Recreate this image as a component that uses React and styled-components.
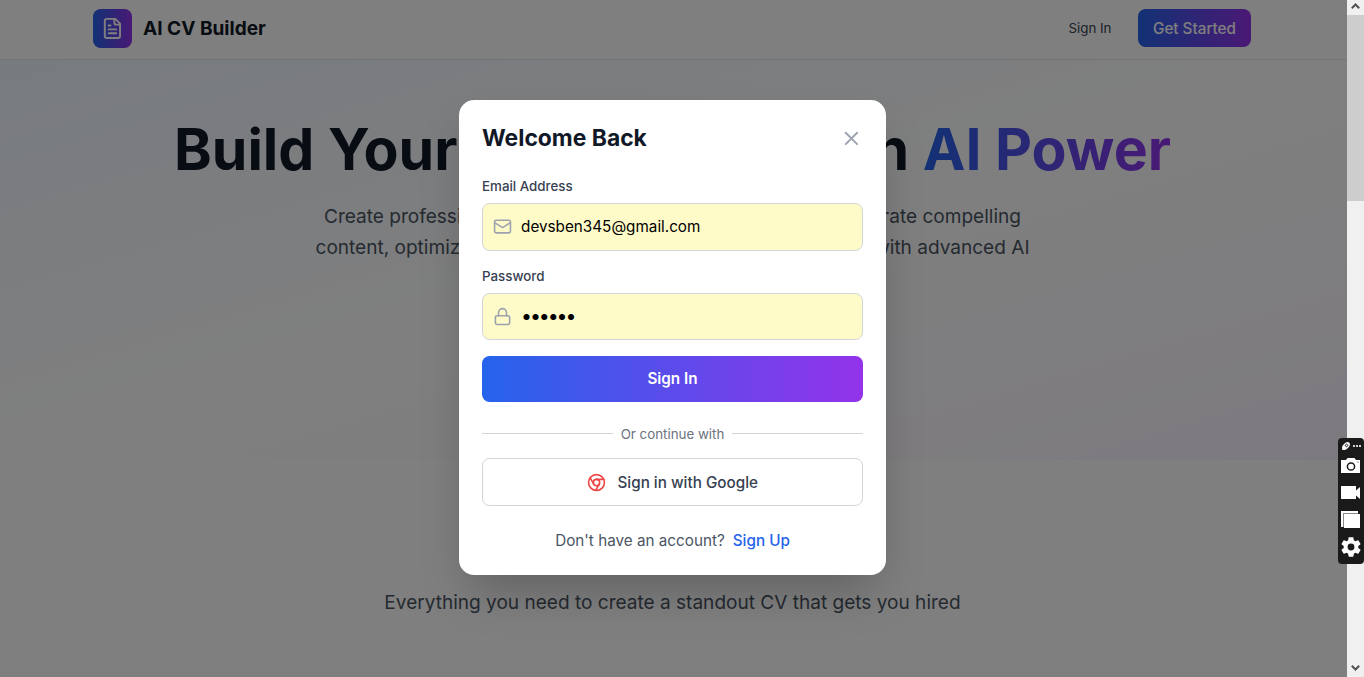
import React from "react";
import styled, { createGlobalStyle } from "styled-components";
import { Mail, Lock, X, Chrome } from "lucide-react";

const GlobalStyle = createGlobalStyle`
  *, *::before, *::after { box-sizing: border-box; }
  html, body { margin: 0; height: 100%; overflow: hidden; }
  body { font-family: Inter, "Liberation Sans", sans-serif; font-size: 15.25px; line-height: 22.9px; color: #111827; }
  h1, h2, p { margin: 0; }
  button, input { font: inherit; margin: 0; }
`;

const brand = "linear-gradient(to right, #2563eb, #9333ea)";

const Window = styled.div`
  display: flex;
  width: 1364px;
  height: 677px;
  overflow: hidden;
`;

const Page = styled.div`
  position: relative;
  width: 1347px;
  height: 677px;
  overflow: hidden;
  background: #fff;
`;

const Header = styled.header`
  height: 60px;
  padding: 0 96px 3px 93px;
  display: flex;
  align-items: center;
  justify-content: space-between;
  background: #fff;
  border-bottom: 1px solid #e5e7eb;
`;

const Brand = styled.div`
  display: flex;
  align-items: center;
  gap: 11px;
`;

const BrandName = styled.span`
  padding-top: 2px;
  font-size: 19.06px;
  font-weight: 700;
`;

const LogoTile = styled.div`
  width: 39px;
  height: 39px;
  border-radius: 7.6px;
  display: grid;
  place-items: center;
  color: #fff;
  background: ${brand};
`;

const Nav = styled.nav`
  display: flex;
  align-items: center;
  gap: 26.5px;
`;

const NavLink = styled.a`
  font-size: 13.34px;
  color: #374151;
`;

const NavButton = styled.button`
  width: 113px;
  height: 38px;
  padding: 2px 0 0;
  border: 0;
  border-radius: 7.6px;
  color: #fff;
  font-weight: 500;
  background: ${brand};
`;

const Hero = styled.section`
  height: 400px;
  padding: 61px 2px 0 0;
  display: flex;
  flex-direction: column;
  align-items: center;
  background: linear-gradient(to bottom right, #eff6ff, #ffffff, #faf5ff);
`;

const HeroTitle = styled.h1`
  font-size: 57.2px;
  line-height: 57.2px;
  font-weight: 700;
  white-space: nowrap;
`;

const GradientText = styled.span`
  color: transparent;
  background: ${brand};
  -webkit-background-clip: text;
  background-clip: text;
`;

const HeroCopy = styled.p`
  margin-top: 22.5px;
  display: flex;
  flex-direction: column;
  align-items: center;
  font-size: 19.06px;
  line-height: 31px;
  color: #4b5563;
`;

const CopyLine = styled.span`
  display: flex;
  justify-content: space-between;
  width: ${(p) => p.$width}px;
  white-space: nowrap;
`;

const Features = styled.section`
  padding: 76px 2px 0 0;
  text-align: center;
`;

const FeaturesTitle = styled.h2`
  font-size: 34.3px;
  line-height: 38px;
  font-weight: 700;
`;

const FeaturesCopy = styled.p`
  margin-top: 16px;
  font-size: 19.06px;
  line-height: 26.7px;
  color: #4b5563;
`;

const Overlay = styled.div`
  position: absolute;
  inset: 0;
  padding: 100px 2px 0 0;
  display: flex;
  justify-content: center;
  align-items: flex-start;
  background: rgba(0, 0, 0, 0.5);
`;

const Dialog = styled.div`
  width: 427px;
  height: 475px;
  padding: 23px;
  border-radius: 15.25px;
  background: #fff;
  box-shadow: 0 23.8px 47.6px -11.4px rgba(0, 0, 0, 0.25);
`;

const DialogHeader = styled.div`
  height: 30.5px;
  margin-bottom: 23px;
  display: flex;
  align-items: center;
  justify-content: space-between;
`;

const DialogTitle = styled.h2`
  font-size: 22.87px;
  line-height: 30.5px;
  font-weight: 700;
`;

const CloseButton = styled.button`
  display: flex;
  padding: 0;
  border: 0;
  background: none;
  color: #9ca3af;
`;

const Field = styled.div`
  margin-bottom: 15.5px;
`;

const Label = styled.label`
  display: block;
  margin-bottom: 7.5px;
  font-size: 13.34px;
  line-height: 19px;
  font-weight: 500;
  color: #374151;
`;

const InputBox = styled.div`
  height: ${(p) => p.$height}px;
  padding: 0 10px;
  display: flex;
  align-items: center;
  gap: 9px;
  border: 1px solid #d1d5db;
  border-radius: 7.6px;
  background: #fffbc8;
  color: #9ca3af;
`;

const Input = styled.input`
  flex: 1;
  min-width: 0;
  padding: 0;
  border: 0;
  outline: 0;
  background: none;
  color: #000;
`;

const PasswordInput = styled(Input)`
  font-size: 19.5px;
  letter-spacing: -2.1px;
`;

const SubmitButton = styled.button`
  display: block;
  width: 100%;
  height: 46px;
  padding: 2px 0 0;
  border: 0;
  border-radius: 7.6px;
  color: #fff;
  font-weight: 600;
  background: ${brand};
`;

const Divider = styled.div`
  margin-top: 22px;
  height: 19px;
  display: flex;
  align-items: center;
  gap: 8px;
  font-size: 13.34px;
  color: #6b7280;

  &::before, &::after {
    content: "";
    flex: 1;
    height: 1px;
    background: #d1d5db;
  }
`;

const DividerText = styled.span`
  padding-top: 2px;
`;

const GoogleButton = styled.button`
  margin-top: 15px;
  padding: 2px 0 0;
  width: 100%;
  height: 48px;
  display: flex;
  align-items: center;
  justify-content: center;
  gap: 11.4px;
  border: 1px solid #d1d5db;
  border-radius: 7.6px;
  background: #fff;
  color: #374151;
  font-weight: 500;
`;

const GoogleLabel = styled.span`
  padding-top: 1px;
`;

const Switch = styled.p`
  margin-top: 24px;
  display: flex;
  justify-content: center;
  gap: 8px;
  color: #4b5563;
`;

const SwitchLink = styled.a`
  color: #2563eb;
  font-weight: 500;
`;

const Scrollbar = styled.div`
  width: 17px;
  height: 677px;
  display: flex;
  flex-direction: column;
  align-items: center;
  background: #f0f0f0;
`;

const ScrollArrow = styled.div`
  height: 15px;
  padding-bottom: 3px;
  display: grid;
  place-items: center;
`;

const Thumb = styled.div`
  width: 17px;
  height: 186px;
  margin-bottom: auto;
  background: #cdcdcd;
`;

const CaptureBar = styled.aside`
  position: fixed;
  right: 0;
  top: 438px;
  width: 26px;
  height: 126px;
  border-radius: 4px;
  background: #1a1a1a;
`;

function FileIcon() {
  return (
    <svg width="22.87" height="22.87" viewBox="0 0 24 24" fill="none" stroke="currentColor" strokeWidth="2" strokeLinecap="round" strokeLinejoin="round">
      <path d="M15 2H6a2 2 0 0 0-2 2v16a2 2 0 0 0 2 2h12a2 2 0 0 0 2-2V7Z" />
      <path d="M14 2v4a2 2 0 0 0 2 2h4M10 9H8M16 13H8M16 17H8" />
    </svg>
  );
}

function Chevron({ down }) {
  return (
    <svg width="9" height="6" viewBox="0 0 9 6" fill="none" stroke="#505050" strokeWidth="2">
      <path d={down ? "M.8.8 4.5 4.5 8.2.8" : "M.8 5.2 4.5 1.5 8.2 5.2"} />
    </svg>
  );
}

function CaptureIcons() {
  return (
    <svg width="26" height="126" viewBox="0 0 26 126" fill="#fff">
      <g transform="rotate(-45 8 8)">
        <ellipse cx="8" cy="8" rx="4.6" ry="2.8" />
        <circle cx="8.8" cy="8" r="1.2" fill="none" stroke="#1a1a1a" strokeWidth=".9" />
      </g>
      <path d="M4 12.2 5 9l2 2Z" />
      <circle cx="16" cy="8" r="1.1" />
      <circle cx="19" cy="8" r="1.1" />
      <circle cx="22" cy="8" r="1.1" />
      <path d="M3 22h5l1.5-2h7l1.5 2h4v13H3Z" />
      <circle cx="13" cy="28.5" r="3.6" fill="none" stroke="#1a1a1a" strokeWidth="1.5" />
      <circle cx="20" cy="24" r=".6" fill="#1a1a1a" />
      <path d="M3 48h15v4.5l4-3.5v12l-4-3.5V61H3Z" />
      <path d="M3 73h17v2H5.500v14H3Z" />
      <path d="M6 76h16v14H6Z" />
      <path d="M5.500 89V75.500H20" fill="none" stroke="#888" />
      <path
        fillRule="evenodd"
        transform="translate(1.300 97.300) scale(.975)"
        d="M19.430 12.980c.040-.320.070-.640.070-.980s-.030-.660-.070-.980l2.110-1.650c.190-.150.240-.420.120-.640l-2-3.460c-.120-.220-.390-.300-.610-.220l-2.490 1c-.520-.400-1.080-.730-1.690-.980l-.380-2.650C14.460 2.180 14.250 2 14 2h-4c-.250 0-.460.180-.490.420l-.380 2.650c-.610.250-1.170.590-1.690.980l-2.490-1c-.230-.090-.490 0-.610.220l-2 3.460c-.130.220-.070.490.120.640l2.110 1.650c-.040.320-.070.650-.070.980s.030.660.070.980l-2.110 1.650c-.190.150-.240.420-.120.640l2 3.460c.120.220.390.300.610.220l2.490-1c.520.400 1.080.730 1.690.980l.380 2.650c.030.240.240.420.490.420h4c.250 0 .460-.180.490-.420l.380-2.650c.610-.250 1.170-.590 1.690-.980l2.490 1c.230.090.490 0 .610-.220l2-3.460c.120-.220.070-.490-.120-.640ZM12 15.500a3.500 3.500 0 1 1 0-7 3.500 3.500 0 0 1 0 7Z"
      />
    </svg>
  );
}

export default function App() {
  return (
    <Window>
      <GlobalStyle />
      <Page>
        <Header>
          <Brand>
            <LogoTile><FileIcon /></LogoTile>
            <BrandName>AI CV Builder</BrandName>
          </Brand>
          <Nav>
            <NavLink>Sign In</NavLink>
            <NavButton>Get Started</NavButton>
          </Nav>
        </Header>
        <Hero>
          <HeroTitle>
            Build Your Perfect CV with <GradientText>AI Power</GradientText>
          </HeroTitle>
          <HeroCopy>
            <CopyLine $width={697}>
              <span>Create professional resumes</span>
              <span>that stand out. Generate compelling</span>
            </CopyLine>
            <CopyLine $width={714}>
              <span>content, optimize for ATS,</span>
              <span>and land your job with advanced AI</span>
            </CopyLine>
          </HeroCopy>
        </Hero>
        <Features>
          <FeaturesTitle>Powerful Features</FeaturesTitle>
          <FeaturesCopy>Everything you need to create a standout CV that gets you hired</FeaturesCopy>
        </Features>
        <Overlay>
          <Dialog role="dialog">
            <DialogHeader>
              <DialogTitle>Welcome Back</DialogTitle>
              <CloseButton aria-label="Close"><X size={22.87} /></CloseButton>
            </DialogHeader>
            <Field>
              <Label htmlFor="email">Email Address</Label>
              <InputBox $height={48}>
                <Mail size={19.06} />
                <Input id="email" type="email" defaultValue="devsben345@gmail.com" />
              </InputBox>
            </Field>
            <Field>
              <Label htmlFor="password">Password</Label>
              <InputBox $height={47}>
                <Lock size={19.06} />
                <PasswordInput id="password" type="password" defaultValue="secret" />
              </InputBox>
            </Field>
            <SubmitButton>Sign In</SubmitButton>
            <Divider><DividerText>Or continue with</DividerText></Divider>
            <GoogleButton>
              <Chrome size={19.06} color="#ef4444" />
              <GoogleLabel>Sign in with Google</GoogleLabel>
            </GoogleButton>
            <Switch>
              Don't have an account?
              <SwitchLink>Sign Up</SwitchLink>
            </Switch>
          </Dialog>
        </Overlay>
      </Page>
      <Scrollbar>
        <ScrollArrow><Chevron /></ScrollArrow>
        <Thumb />
        <ScrollArrow><Chevron down /></ScrollArrow>
      </Scrollbar>
      <CaptureBar><CaptureIcons /></CaptureBar>
    </Window>
  );
}
